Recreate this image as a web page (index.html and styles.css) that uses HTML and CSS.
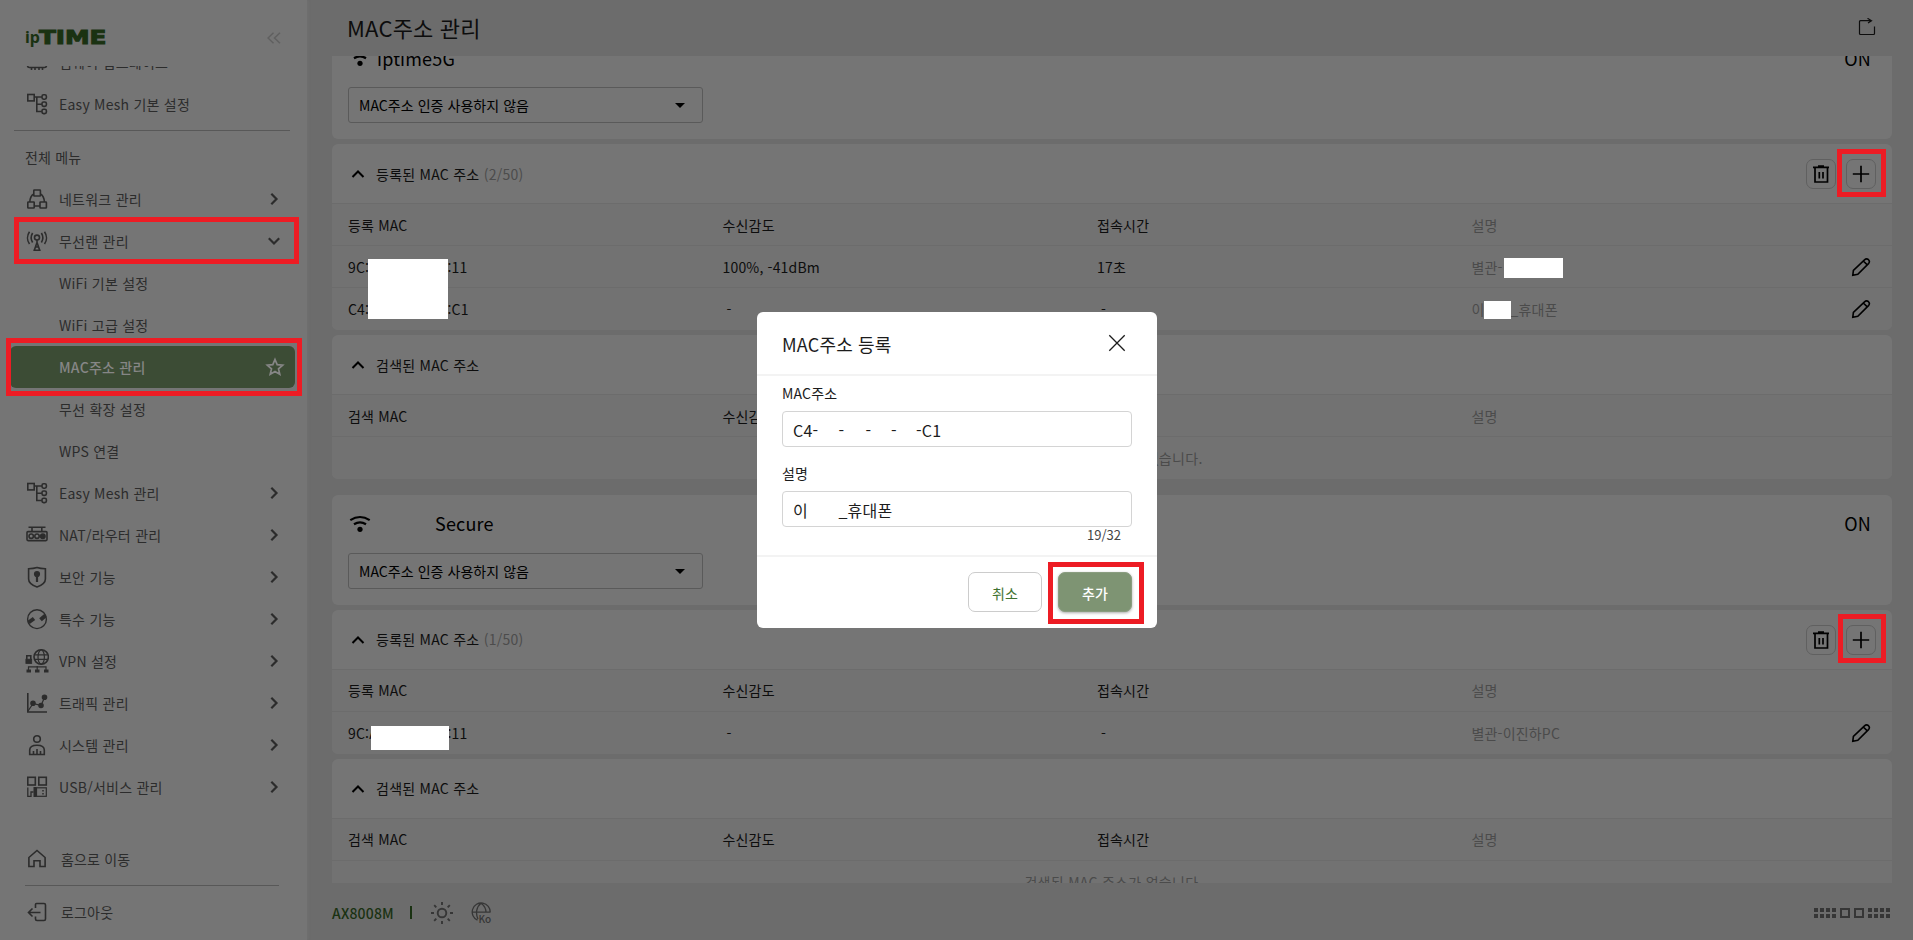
FILE: index.html
```html
<!DOCTYPE html>
<html lang="ko">
<head>
<meta charset="utf-8">
<title>MAC주소 관리</title>
<link rel="stylesheet" href="styles.css">
</head>
<body>
<svg class="defs" width="0" height="0">
  <symbol id="mesh" viewBox="0 0 24 24"><rect x="2.8" y="2.5" width="6.4" height="6.4"/><path d="M9.5 5H16.8M11.8 5V19.5H16.8M11.8 12.2H16.8"/><rect x="17" y="2.8" width="4.4" height="4.4" rx="1.6"/><rect x="17" y="10" width="4.4" height="4.4" rx="1.6"/><rect x="17" y="17.2" width="4.4" height="4.4" rx="1.6"/></symbol>
  <symbol id="net" viewBox="0 0 24 24"><rect x="8.8" y="3" width="6.6" height="6" rx=".6"/><rect x="2.8" y="15" width="6.4" height="6" rx=".6"/><rect x="15" y="15" width="6.4" height="6" rx=".6"/><path d="M8.8 7C6 8.500 5 11.500 4.800 15M15.400 7C18.200 8.500 19.200 11.500 19.400 15M9.200 19H15"/></symbol>
  <symbol id="antenna" viewBox="0 0 24 24"><circle cx="12" cy="8.600" r="2.500"/><path d="M12 11.300V14M12 13.500L9.300 21.300H14.700ZM8.500 21.300H15.500M10.500 18H13.500M7.600 4C5.800 7 5.800 10.500 7.600 13.500M16.400 4C18.200 7 18.200 10.500 16.400 13.500M4.500 2.800C1.900 6.500 1.900 11.500 4.500 15M19.500 2.800C22.100 6.500 22.100 11.500 19.500 15"/></symbol>
  <symbol id="nat" viewBox="0 0 24 24"><path d="M3.500 4.300H20.500M7 4.300V8.500M16.800 4.300V8.500"/><rect x="2" y="8.600" width="20" height="9" rx="1"/><circle cx="6.200" cy="13.200" r="2.200"/><circle cx="12" cy="13.200" r="2.200"/><circle cx="17.800" cy="13.200" r="2.200" class="solid"/></symbol>
  <symbol id="shield" viewBox="0 0 24 24"><path d="M12 2.500C9 3.500 6 3.700 3.600 3.700V14C3.600 18 8 20.600 12 22C16 20.600 20.400 18 20.400 14V3.700C18 3.700 15 3.500 12 2.500Z"/><circle cx="12" cy="9" r="2.300" class="solid"/><path d="M12 10V17" stroke-width="2.200"/></symbol>
  <symbol id="special" viewBox="0 0 24 24"><circle cx="12" cy="12.200" r="9.400" stroke-width="1.400"/><path d="M3.500 15.500L9 11.500M15.500 12.800L20.500 8.500" stroke-width="4"/></symbol>
  <symbol id="vpn" viewBox="0 0 24 24"><circle cx="16.200" cy="8" r="7.200"/><ellipse cx="16.200" cy="8" rx="3.200" ry="7.200" stroke-width="1.200"/><path d="M9.500 5.800H23M9.500 10.400H23" stroke-width="1.200"/><path d="M1.800 10.500V6.800H5.800V10.500"/><rect x=".9" y="10.200" width="5.800" height="4.300" class="solid" stroke-width=".8"/><path d="M3.500 21V17.800H21V21M12.200 17V21" stroke-width="1.200"/><path d="M1.500 22H6M10 22H14.500M19 22H23.500" stroke-width="3.200"/></symbol>
  <symbol id="traffic" viewBox="0 0 24 24"><path d="M2.800 2V21H22"/><path d="M3 20L8.200 12.500L16 14.500L19.500 6.500" stroke-width="1.200"/><circle cx="8" cy="12.200" r="2" class="solid"/><circle cx="16" cy="14.500" r="2" class="solid"/><circle cx="19.500" cy="6.300" r="2" class="solid"/></symbol>
  <symbol id="system" viewBox="0 0 24 24"><circle cx="12" cy="6" r="3.300"/><path d="M4.700 21.500V17C4.700 13.500 8 12.200 12 12.200S19.300 13.500 19.300 17V21.500ZM8.500 21V18M12 21V16M15.500 21V18"/></symbol>
  <symbol id="usb" viewBox="0 0 24 24"><rect x="2.800" y="2.300" width="7.500" height="7.700"/><rect x="13.800" y="2.300" width="7.500" height="7.700"/><path d="M2.800 12.500V21.300H6V17H8.500" stroke-width="1.300"/><path d="M10 12V22" stroke-width="3"/><rect x="11.500" y="12.800" width="9.800" height="8.500" stroke-width="1.200"/><path d="M18 15V16.500M18 18V19.500" stroke-width="1.500"/></symbol>
  <symbol id="chip" viewBox="0 0 24 24"><rect x="2.500" y="5" width="19" height="12.500" rx="2"/><path d="M6.500 17V20M10 17V20M14 17V20M17.500 17V20"/></symbol>
  <symbol id="home" viewBox="0 0 24 24"><path d="M3.900 10.500L12 3.500L20.100 10.500V19.500H15V13.800H9V19.500H3.900Z"/></symbol>
  <symbol id="logout" viewBox="0 0 24 24"><path d="M10.500 8V4.500Q10.500 3.500 11.500 3.500H19Q20.500 3.500 20.500 5V19Q20.500 20.500 19 20.500H12Q10.500 20.500 10.500 19V16.500M15.500 12.500H3.500M7.500 8.500L3.500 12.500L7.500 16.500"/></symbol>
  <symbol id="right" viewBox="0 0 12 12"><path d="M3.300 .8L8.500 6L3.300 11.200"/></symbol>
  <symbol id="down" viewBox="0 0 12 12"><path d="M.8 3.300L6 8.500L11.200 3.300"/></symbol>
  <symbol id="up" viewBox="0 0 14 14"><path d="M1.500 10L7 4.500L12.500 10"/></symbol>
  <symbol id="star" viewBox="0 0 20 20"><path d="M10 2.500L12.200 7.700L17.700 8.200L13.500 11.900L14.800 17.300L10 14.400L5.200 17.300L6.500 11.900L2.300 8.200L7.800 7.700Z"/></symbol>
  <symbol id="wifi" viewBox="0 0 22 22"><path d="M1.300 7.200Q11 .8 20.700 7.200M5 11.300Q11 7.500 17 11.300"/><circle cx="11" cy="16.300" r="2.600" class="dot"/></symbol>
  <symbol id="trash" viewBox="0 0 20 20"><path d="M2 3.300H18M7 2H13M4 3.500V18H16.500V3.500M8.300 8V14.500M12 8V14.500"/></symbol>
  <symbol id="plus" viewBox="0 0 20 20"><path d="M10 1.800V18.200M1.800 10H18.200"/></symbol>
  <symbol id="pencil" viewBox="0 0 20 20"><path d="M1.800 18.200L2.400 13.300L13.500 2.800Q15.500 1 17.500 2.700Q19.300 4.600 17.500 6.600L6.800 17.300ZM12.300 4L16.300 7.800"/></symbol>
</svg>

<div class="app">
  <aside class="side">
    <div class="brand">
      <svg class="logo" width="84" height="24" viewBox="0 0 84 24"><text x="1" y="17" class="logo-ip" textLength="15" lengthAdjust="spacingAndGlyphs">ip</text><text x="15" y="17.500" class="logo-time" textLength="67.500" lengthAdjust="spacingAndGlyphs">TIME</text></svg>
      <svg class="collapse" width="14" height="12" viewBox="0 0 14 12"><path d="M6.500 .7L1 6L6.500 11.300M13 .7L7.500 6L13 11.300"/></svg>
    </div>
    <nav class="menu">
      <div class="item"><svg class="ic"><use href="#chip"/></svg><span>펌웨어 업그레이드</span></div>
      <div class="item"><svg class="ic"><use href="#mesh"/></svg><span>Easy Mesh 기본 설정</span></div>
      <div class="menu-title">전체 메뉴</div>
      <div class="item"><svg class="ic"><use href="#net"/></svg><span>네트워크 관리</span><svg class="arr"><use href="#right"/></svg></div>
      <div class="item"><svg class="ic"><use href="#antenna"/></svg><span>무선랜 관리</span><svg class="arr"><use href="#down"/></svg></div>
      <div class="item sub"><span>WiFi 기본 설정</span></div>
      <div class="item sub"><span>WiFi 고급 설정</span></div>
      <div class="item sub active"><span>MAC주소 관리</span><svg class="star"><use href="#star"/></svg></div>
      <div class="item sub"><span>무선 확장 설정</span></div>
      <div class="item sub"><span>WPS 연결</span></div>
      <div class="item"><svg class="ic"><use href="#mesh"/></svg><span>Easy Mesh 관리</span><svg class="arr"><use href="#right"/></svg></div>
      <div class="item"><svg class="ic"><use href="#nat"/></svg><span>NAT/라우터 관리</span><svg class="arr"><use href="#right"/></svg></div>
      <div class="item"><svg class="ic"><use href="#shield"/></svg><span>보안 기능</span><svg class="arr"><use href="#right"/></svg></div>
      <div class="item"><svg class="ic"><use href="#special"/></svg><span>특수 기능</span><svg class="arr"><use href="#right"/></svg></div>
      <div class="item"><svg class="ic"><use href="#vpn"/></svg><span>VPN 설정</span><svg class="arr"><use href="#right"/></svg></div>
      <div class="item"><svg class="ic"><use href="#traffic"/></svg><span>트래픽 관리</span><svg class="arr"><use href="#right"/></svg></div>
      <div class="item"><svg class="ic"><use href="#system"/></svg><span>시스템 관리</span><svg class="arr"><use href="#right"/></svg></div>
      <div class="item"><svg class="ic"><use href="#usb"/></svg><span>USB/서비스 관리</span><svg class="arr"><use href="#right"/></svg></div>
    </nav>
    <div class="side-foot">
      <div class="foot-item"><svg class="ic"><use href="#home"/></svg><span>홈으로 이동</span></div>
      <div class="foot-item logout"><svg class="ic"><use href="#logout"/></svg><span>로그아웃</span></div>
    </div>
  </aside>

  <main class="main">
    <header class="top">
      <h1>MAC주소 관리</h1>
      <svg class="share" width="18" height="18" viewBox="0 0 18 18"><path d="M8 2.700H2.500Q1.500 2.700 1.500 3.700V15.500Q1.500 16.500 2.500 16.500H15.500Q16.500 16.500 16.500 15.500V8.500M5 2.700H13.500M9.500 .3L13.500 2.700L10 5"/></svg>
    </header>
    <div class="content">
      <div class="cards">
        <section class="card ssid">
          <div class="ssid-head"><svg class="wifi"><use href="#wifi"/></svg><span class="name">iptime5G</span><span class="on">ON</span></div>
          <div class="select"><span>MAC주소 인증 사용하지 않음</span><i class="caret"></i></div>
        </section>
        <section class="card">
          <div class="card-head"><svg class="up"><use href="#up"/></svg><span>등록된 MAC 주소 <em>(2/50)</em></span><div class="tools"><b class="tool"><svg><use href="#trash"/></svg></b><b class="tool"><svg><use href="#plus"/></svg></b></div></div>
          <div class="row"><span>등록 MAC</span><span>수신감도</span><span>접속시간</span><span class="desc">설명</span></div>
          <div class="row"><span><u>9C:</u>:11</span><span>100%, -41dBm</span><span>17초</span><span class="desc">별관-</span><svg class="pen"><use href="#pencil"/></svg></div>
          <div class="row"><span><u>C4:</u>:C1</span><span class="dash">-</span><span class="dash">-</span><span class="desc"><u class="gap">이</u>_휴대폰</span><svg class="pen"><use href="#pencil"/></svg></div>
        </section>
        <section class="card">
          <div class="card-head"><svg class="up"><use href="#up"/></svg><span>검색된 MAC 주소</span></div>
          <div class="row"><span>검색 MAC</span><span>수신감도</span><span>접속시간</span><span class="desc">설명</span></div>
          <div class="row empty">검색된 MAC 주소가 없습니다.</div>
        </section>
        <section class="card ssid second">
          <div class="ssid-head snug"><svg class="wifi"><use href="#wifi"/></svg><span class="name indented">Secure</span><span class="on">ON</span></div>
          <div class="select"><span>MAC주소 인증 사용하지 않음</span><i class="caret"></i></div>
        </section>
        <section class="card">
          <div class="card-head snug"><svg class="up"><use href="#up"/></svg><span>등록된 MAC 주소 <em>(1/50)</em></span><div class="tools"><b class="tool"><svg><use href="#trash"/></svg></b><b class="tool"><svg><use href="#plus"/></svg></b></div></div>
          <div class="row snug"><span>등록 MAC</span><span>수신감도</span><span>접속시간</span><span class="desc">설명</span></div>
          <div class="row"><span><u>9C:A</u>:11</span><span class="dash">-</span><span class="dash">-</span><span class="desc">별관-이진하PC</span><svg class="pen"><use href="#pencil"/></svg></div>
        </section>
        <section class="card">
          <div class="card-head snug"><svg class="up"><use href="#up"/></svg><span>검색된 MAC 주소</span></div>
          <div class="row snug"><span>검색 MAC</span><span>수신감도</span><span>접속시간</span><span class="desc">설명</span></div>
          <div class="row empty">검색된 MAC 주소가 없습니다.</div>
        </section>
      </div>
    </div>
    <footer class="bottom">
      <span class="model">AX8008M</span><i class="bar"></i>
      <svg class="sun" width="24" height="24" viewBox="0 0 24 24"><circle cx="12" cy="12" r="4.300"/><path d="M12 1V4M12 20V23M1 12H4M20 12H23M4.200 4.200L6.300 6.300M17.700 17.700L19.800 19.800M4.200 19.800L6.300 17.700M17.700 6.300L19.800 4.200"/></svg>
      <svg class="lang" width="22" height="24" viewBox="0 0 22 24"><path d="M6.500 19.200A9 9 0 1 1 19.200 11.500M1.500 11.200H19M7 18C4.500 13 5 6 10 2.200C14 5 15 8 15 11.500"/><text x="7.500" y="22">Ko</text></svg>
      <svg class="ports" width="77" height="12" viewBox="0 0 77 12"><path d="M0 3H22M0 9H22M54 3H76M54 9H76" stroke-width="4" stroke-dasharray="4 2"/><path d="M27 2H35V10H27ZM41 2H49V10H41Z" stroke-width="2"/></svg>
    </footer>
  </main>
</div>

<div class="modal">
  <div class="modal-head"><h2>MAC주소 등록</h2><svg width="18" height="18" viewBox="0 0 18 18"><path d="M1.300 1.300L16.700 16.700M16.700 1.300L1.300 16.700"/></svg></div>
  <div class="modal-body">
    <label>MAC주소</label>
    <div class="input"><span class="m1">C4-</span><span class="m2">-</span><span class="m3">-</span><span class="m4">-</span><span>-C1</span></div>
    <label class="l2">설명</label>
    <div class="input"><span class="m1">이</span><span>_휴대폰</span></div>
    <div class="count">19/32</div>
  </div>
  <div class="modal-foot"><button class="cancel">취소</button><button class="add">추가</button></div>
</div>

<i class="mask k1"></i><i class="mask k2"></i><i class="mask k3"></i><i class="mask k4"></i>
<i class="mark r1"></i><i class="mark r2"></i><i class="mark r3"></i><i class="mark r4"></i><i class="mark r5"></i>
</body>
</html>
```
FILE: styles.css
```css
* { box-sizing: border-box; }
body { margin: 0; width: 1913px; height: 940px; overflow: hidden; position: relative; background: #6c6c6c; font: 14px/20px "Noto Sans CJK KR", "Noto Sans", sans-serif; color: #0d0d0d; letter-spacing: .18px; }
svg { display: block; fill: none; stroke: currentColor; flex: none; }
h1, h2 { margin: 0; font-weight: 400; }
.defs { position: absolute; }
.app { display: flex; height: 940px; }

.side { width: 307px; background: #757575; display: flex; flex-direction: column; color: #2c2c2c; box-shadow: 1px 0 2px #707070; }
.brand { height: 66px; padding: 26px 26px 0 24px; display: flex; justify-content: space-between; }
.logo { stroke: none; fill: #1a3212; overflow: visible; letter-spacing: 0; }
.logo-ip { font: 700 16px "Noto Sans", sans-serif; }
.logo-time { font: 700 19px "DejaVu Sans", sans-serif; stroke: #1a3212; stroke-width: 1px; }
.collapse { margin-top: 6px; color: #606060; stroke-width: 1.500; }
.menu { height: 747px; overflow: hidden; }
.item { height: 42px; display: flex; align-items: center; padding: 0 27px 0 25px; }
.item:first-child { margin-top: -25px; }
.item span { margin-left: 10px; flex: 1; letter-spacing: .24px; }
.ic { width: 24px; height: 24px; stroke-width: 1.600; }
.solid { fill: currentColor; }
.arr { width: 12px; height: 12px; stroke-width: 2.200; }
.sub { padding-left: 49px; }
.active { background: #3c4c35; color: #868686; margin: 0 12px 0 10px; padding: 0 10px 0 39px; border-radius: 6px; font-weight: 500; }
.star { width: 20px; height: 20px; stroke-width: 1.700; }
.menu-title { margin: 5px 17px 0 14px; border-top: 1px solid #585858; height: 48px; padding: 16px 0 0 11px; }
.side-foot { margin-top: 25px; }
.foot-item { height: 42px; margin: 0 28px 0 25px; display: flex; align-items: center; }
.foot-item span { margin-left: 12px; }
.logout { border-top: 1px solid #585858; height: 53px; margin-top: 5px; }

.main { flex: 1; padding: 0 21px 0 25px; display: flex; flex-direction: column; }
.top { height: 56px; display: flex; justify-content: space-between; padding: 0 16px 0 15px; align-items: center; }
.top h1 { font-size: 22px; line-height: 30px; letter-spacing: .2px; margin-top: -3px; }
.share { margin-top: -3px; stroke-width: 1.200; }
.content { height: 827px; overflow: hidden; }
.cards { margin-top: -27px; display: flex; flex-direction: column; gap: 5px; }
.card { background: #757575; border-radius: 6px; flex: none; }
.ssid { height: 110px; padding: 15px 16px; }
.second { margin-top: 11px; }
.ssid-head { height: 28px; display: flex; align-items: center; font-size: 18px; color: #000; padding: 0 5px 0 1px; }
.snug span { position: relative; top: -1px; }
.snug em { position: static; }
.wifi { width: 22px; height: 22px; stroke-width: 2.200; }
.wifi .dot, .dot { fill: currentColor; stroke: none; }
.name { margin-left: 6px; flex: 1; }
.indented { margin-left: 64px; }
.select { width: 355px; height: 36px; margin-top: 15px; border: 1px solid #5a5a5a; border-radius: 3px; display: flex; align-items: center; justify-content: space-between; padding: 0 17px 0 10px; color: #000; letter-spacing: .05px; }
.caret { border: 5px solid transparent; border-top-color: #000; border-bottom: 0; }
.card-head { height: 59px; display: flex; align-items: center; padding: 0 16px 0 19px; letter-spacing: .26px; }
.up { width: 14px; height: 14px; margin-right: 11px; stroke-width: 2; color: #000; }
em { font-style: normal; color: #4c4c4c; }
.tools { margin-left: auto; display: flex; gap: 10px; }
.tool { width: 30px; height: 30px; border: 1px solid #606060; border-radius: 7px; display: grid; place-items: center; color: #000; }
.tool svg { width: 20px; height: 20px; stroke-width: 1.700; }
.row { height: 42px; border-top: 1px solid #6c6c6c; display: grid; grid-template-columns: 374.500px 374.500px 374.500px 1fr 20px; align-items: center; padding: 0 21px 0 16px; background: #727272; }
.row:last-child { height: 43px; border-radius: 0 0 6px 6px; }
.row u { text-decoration: none; display: inline-block; width: 99.500px; }
.row u.gap { width: 39px; }
.dash { padding-left: 4px; }
.desc { color: #4b4b4b; }
.pen { width: 20px; height: 20px; stroke-width: 1.600; color: #000; }
.row.empty { display: block; text-align: center; color: #4b4b4b; padding: 11px 13px 0 16px; letter-spacing: .3px; }
.bottom { height: 57px; display: flex; align-items: center; padding: 2px 1px 0 0; color: #363636; }
.model { color: #1a3212; font-weight: 500; }
.bar { width: 2px; height: 13px; background: #1a3212; margin-left: 16px; }
.sun { margin-left: 18px; stroke-width: 1.900; }
.lang { margin-left: 17px; stroke-width: 1.300; }
.lang text { font: 500 10px "Noto Sans CJK KR", sans-serif; fill: currentColor; stroke: none; letter-spacing: 0; }
.ports { margin-left: auto; }

.modal { position: absolute; left: 757px; top: 312px; width: 400px; height: 316px; background: #fff; border-radius: 6px; color: #1c1c1c; }
.modal-head { height: 64px; border-bottom: 2px solid #f3f3f3; display: flex; align-items: center; justify-content: space-between; padding: 0 31px 0 25px; }
.modal-head h2 { font-size: 18px; margin-top: 2px; }
.modal-head svg { stroke-width: 1.300; margin-top: -1px; }
.modal-body { padding: 7px 25px 0; height: 179px; }
label { display: block; font-size: 14px; height: 28px; }
.input { height: 36px; border: 1.500px solid #d4d4d4; border-radius: 4px; padding: 1px 10px 0; display: flex; align-items: center; font-size: 16px; }
.l2 { margin-top: 16px; }
.m1 { width: 45.500px; }
.m2 { width: 27px; }
.m3 { width: 25.500px; }
.m4 { width: 25px; }
.count { text-align: right; font-size: 13px; line-height: 15px; padding-right: 11px; color: #444; letter-spacing: 0; }
.modal-foot { border-top: 2px solid #f3f3f3; padding: 15px 25px 0; display: flex; justify-content: flex-end; gap: 16px; }
button { width: 74px; height: 40px; border-radius: 7px; font: 500 14px "Noto Sans CJK KR", sans-serif; padding: 1px 0 0; }
.cancel { background: #fff; border: 1px solid #ccc; color: #3f7230; font-weight: 400; }
.add { background: #7e9473; border: 1px solid #8a9d80; color: #fff; box-shadow: 0 1px 3px #aaa; }

.mask { position: absolute; background: #fff; }
.k1 { left: 368px; top: 259px; width: 80px; height: 60px; }
.k2 { left: 1504px; top: 258px; width: 59px; height: 20px; }
.k3 { left: 1484px; top: 301px; width: 27px; height: 18px; }
.k4 { left: 371px; top: 726px; width: 78px; height: 24px; }
.mark { position: absolute; border: 5px solid #ed1c24; }
.r1 { left: 14px; top: 217px; width: 285px; height: 47px; }
.r2 { left: 6px; top: 338px; width: 296px; height: 58px; }
.r3 { left: 1837px; top: 149px; width: 49px; height: 48px; }
.r4 { left: 1838px; top: 614px; width: 48px; height: 49px; }
.r5 { left: 1048px; top: 562px; width: 96px; height: 62px; }
```
